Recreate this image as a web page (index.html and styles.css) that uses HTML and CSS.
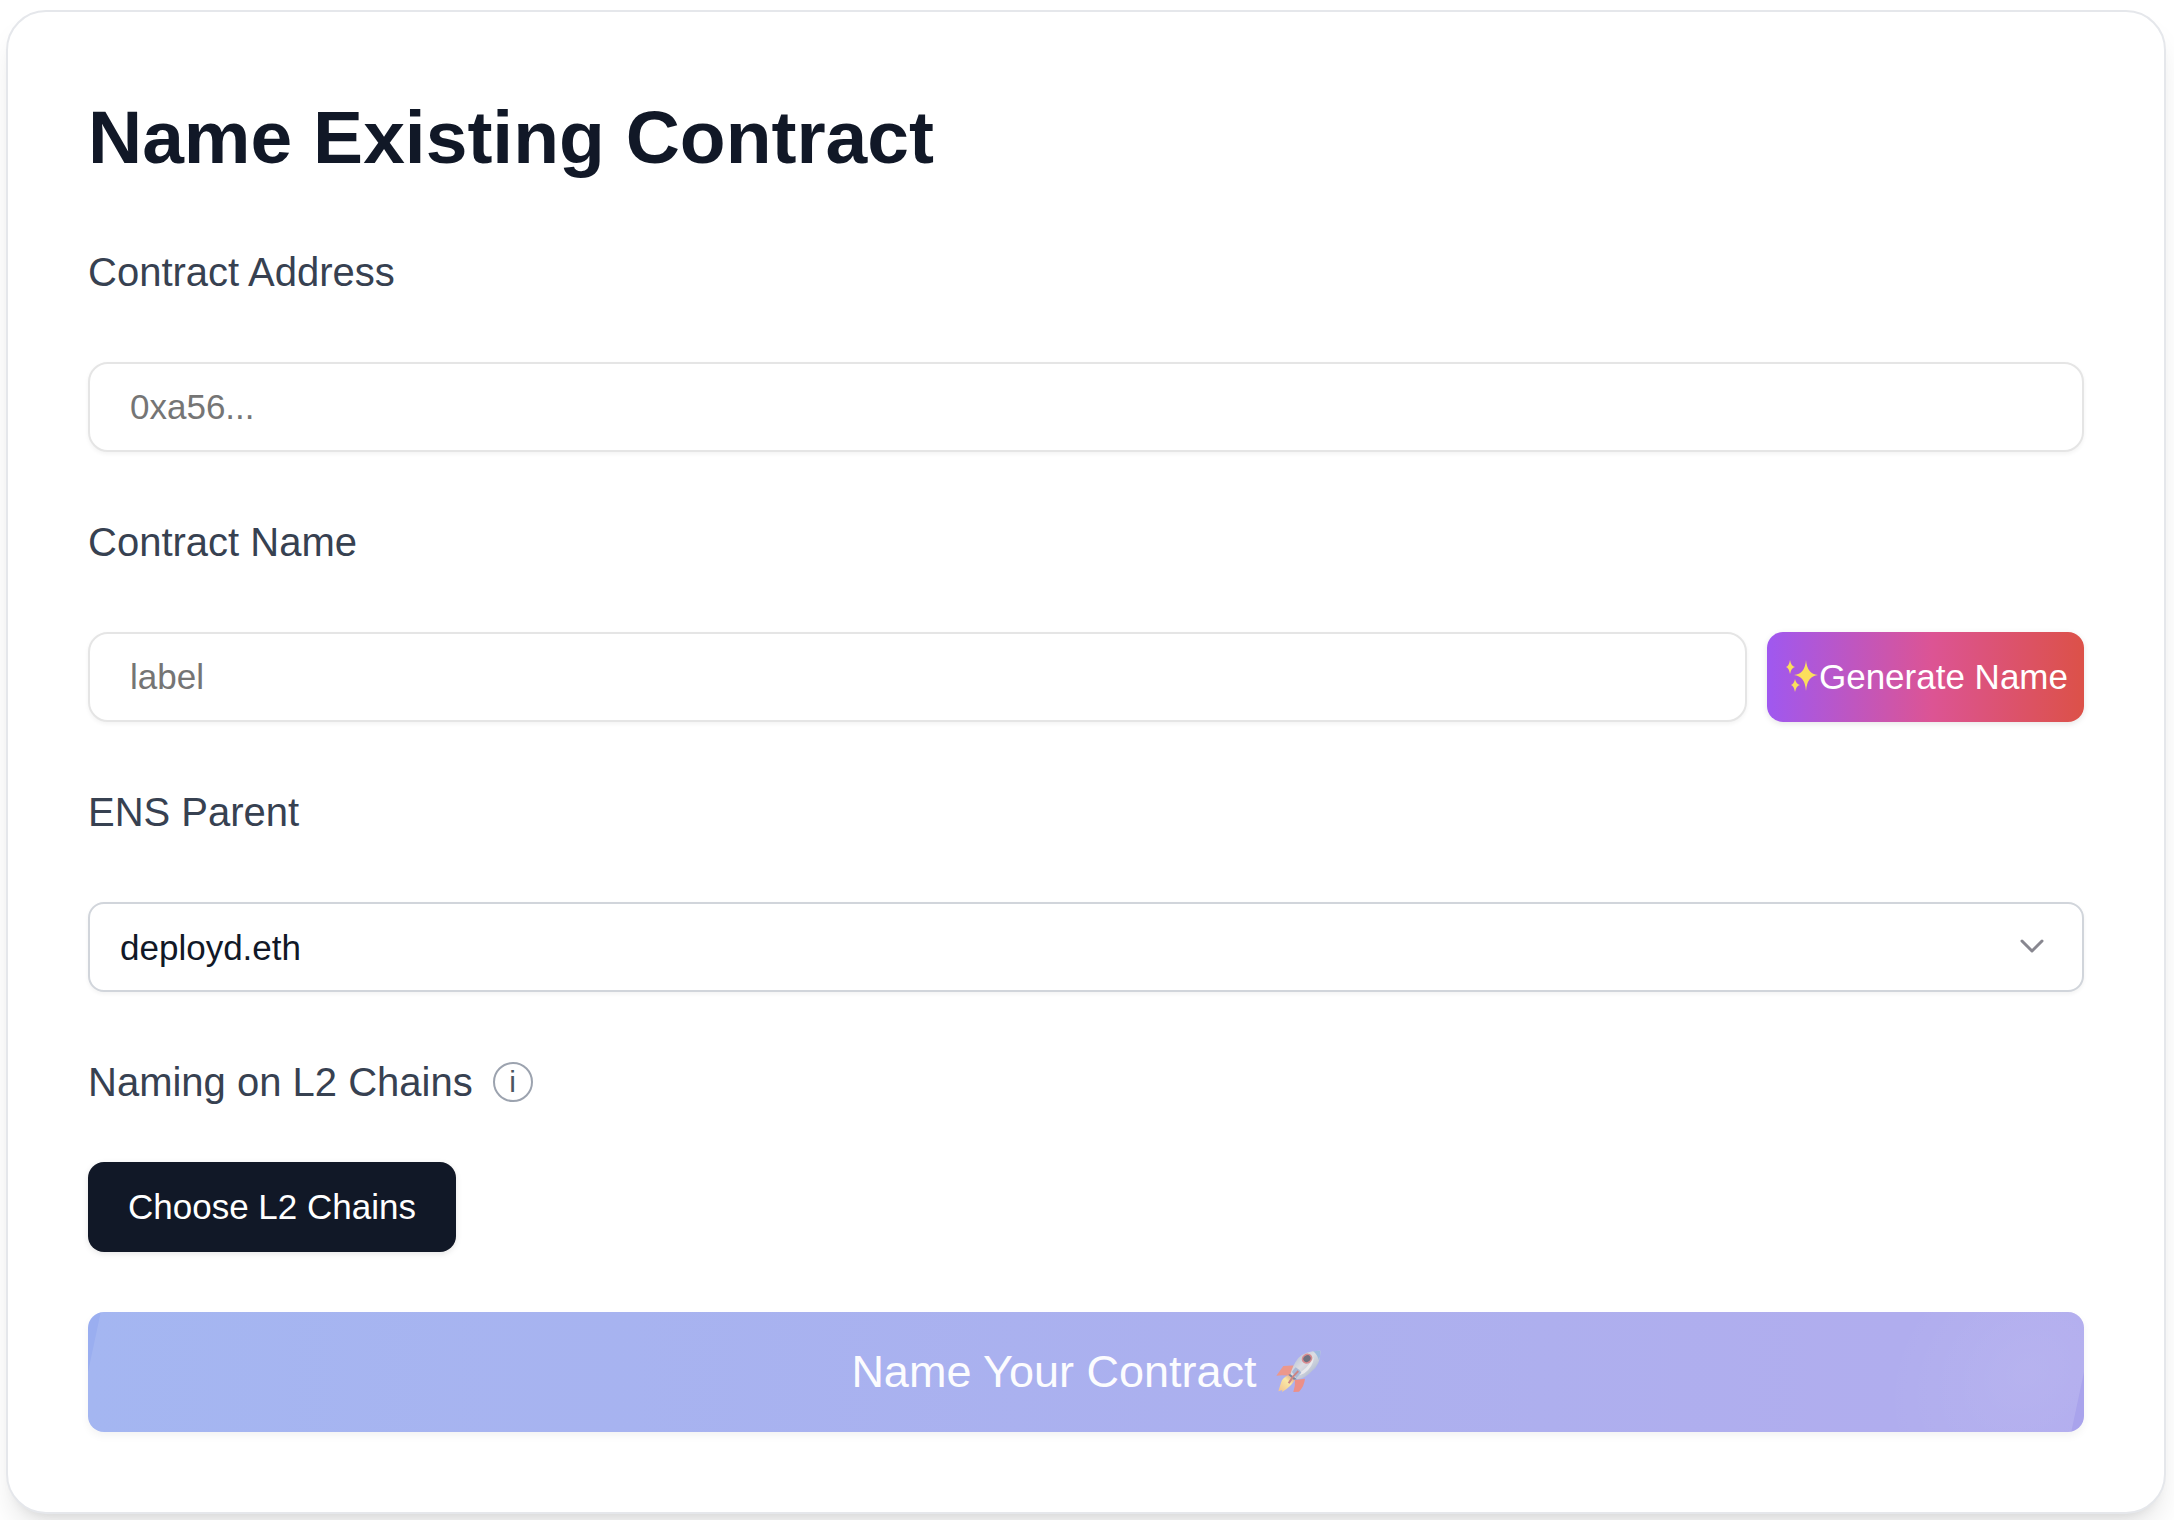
FILE: index.html
```html
<!DOCTYPE html>
<html lang="en">
<head>
    <meta charset="UTF-8">
    <meta name="viewport" content="width=device-width, initial-scale=1.0">
    <title>Name Existing Contract</title>
    <link rel="stylesheet" href="styles.css">
</head>
<body>

    <main class="card">
        <h1>Name Existing Contract</h1>

        <form class="name-form">
            <div class="field">
                <label for="address">Contract Address</label>
                <input type="text" id="address" class="text-input" placeholder="0xa56...">
            </div>

            <div class="field">
                <label for="name">Contract Name</label>
                <div class="input-row">
                    <input type="text" id="name" class="text-input" placeholder="label">
                    <button type="button" class="btn generate-btn">
                        <svg class="sparkles" viewBox="0 0 36 36" aria-hidden="true">
                            <path d="M23 1Q24 15 35 16Q24 17 23 32Q22 17 11 16Q22 15 23 1Z"/>
                            <path d="M7 1Q8 7 12 8Q8 9 7 15Q6 9 3 8Q6 7 7 1Z"/>
                            <path d="M12 20Q13 25 17 26Q13 27 12 33Q11 27 8 26Q11 25 12 20Z"/>
                        </svg>
                        Generate Name
                    </button>
                </div>
            </div>

            <div class="field">
                <label for="parent">ENS Parent</label>
                <div class="select-wrap">
                    <select id="parent" class="select">
                        <option>deployd.eth</option>
                    </select>
                    <svg class="chevron" viewBox="0 0 28 28" aria-hidden="true">
                        <path d="M4 8L14 18L24 8"/>
                    </svg>
                </div>
            </div>

            <div class="field chains">
                <div class="label-row">
                    <label for="chains">Naming on L2 Chains</label>
                    <span class="info">i</span>
                </div>
                <button type="button" id="chains" class="btn chains-btn">Choose L2 Chains</button>
            </div>

            <button type="submit" class="btn submit-btn">
                <span>Name Your Contract</span>
                <svg class="rocket" viewBox="4 0 156 168" aria-hidden="true">
                    <defs>
                        <linearGradient id="body" x1="0" y1="0" x2="1" y2="1">
                            <stop offset="0" stop-color="#a3b3cf"/>
                            <stop offset="0.45" stop-color="#dcdde2"/>
                            <stop offset="0.65" stop-color="#c4cbd8"/>
                            <stop offset="1" stop-color="#8fa0c4"/>
                        </linearGradient>
                        <linearGradient id="flame" x1="1" y1="0" x2="0" y2="1">
                            <stop offset="0" stop-color="#d98b83"/>
                            <stop offset="0.4" stop-color="#f9e9a6"/>
                            <stop offset="1" stop-color="#f3c08e"/>
                        </linearGradient>
                    </defs>
                    <path fill="#ec988c" d="M26 95L47 66Q66 64 86 65L68 96Q47 92 26 95Z"/>
                    <path fill="#ec8f88" d="M82 108L112 104Q110 126 94 143L77 144Q83 126 82 108Z"/>
                    <path fill="url(#flame)" d="M61 94Q44 102 40 116L32 142L44 138L43 144Q69 130 83 106Z"/>
                    <path fill="#77869f" d="M62 92L71 89L90 105L78 107Z"/>
                    <path fill="url(#body)" d="M158 20Q160 60 132 82Q115 103 88 106L68 91Q75 64 92 42Q112 20 158 20Z"/>
                    <path fill="#9dbbe0" d="M136 22L158 20Q159 34 154 49Q148 30 136 22Z"/>
                    <path fill="#e9e9ec" d="M82 94Q116 80 139 39Q136 69 110 88Q97 96 82 94Z"/>
                    <path fill="#a9b8d6" d="M73 84Q79 73 84 70Q96 77 101 86L86 102Z"/>
                    <path fill="none" stroke="#cc8585" stroke-width="6" d="M92 81Q76 95 63 118"/>
                    <ellipse cx="118" cy="44" rx="14" ry="12" fill="#70717f" stroke="#d88a8f" stroke-width="5" transform="rotate(-35 118 44)"/>
                </svg>
            </button>
        </form>
    </main>

</body>
</html>
```
FILE: styles.css
```css
* {
    box-sizing: border-box;
}

body {
    margin: 0;
    padding: 10px 8px 6px 6px;
    font-family: Arial, "Liberation Sans", sans-serif;
    background-color: #fff;
}

.card {
    padding: 80px;
    border: 2px solid #e5e7eb;
    border-radius: 40px;
    background-color: #fff;
    box-shadow: 0 20px 30px -6px rgba(0, 0, 0, 0.1), 0 8px 12px -8px rgba(0, 0, 0, 0.1);
}

h1 {
    margin: 0 0 60px;
    font-size: 75px;
    line-height: 90px;
    color: #111827;
}

.name-form,
.field {
    display: flex;
    flex-direction: column;
    gap: 60px;
}

.chains {
    gap: 50px;
    align-items: flex-start;
}

label {
    font-size: 40px;
    line-height: 60px;
    color: #374151;
}

.input-row,
.label-row {
    display: flex;
    align-items: center;
    gap: 20px;
}

.text-input,
.select {
    width: 100%;
    height: 90px;
    font-family: inherit;
    font-size: 35px;
    color: #111827;
    background-color: #fff;
    box-shadow: 0 2px 4px rgba(0, 0, 0, 0.05);
}

.text-input {
    flex: 1;
    min-width: 0;
    padding: 0 40px;
    border: 2px solid #e5e5e5;
    border-radius: 20px;
}

.field > .text-input {
    flex: none;
}

.text-input::placeholder {
    color: #757575;
}

.select-wrap {
    position: relative;
}

.select {
    display: block;
    appearance: none;
    padding: 0 30px;
    border: 2px solid #d1d5db;
    border-radius: 16px;
}

/* sits over the right end of the select */
.chevron {
    position: absolute;
    top: 50%;
    right: 38px;
    width: 28px;
    height: 28px;
    margin-top: -14px;
    fill: none;
    stroke: #888790;
    stroke-width: 3;
    stroke-linecap: round;
    stroke-linejoin: round;
    pointer-events: none;
}

.info {
    width: 40px;
    height: 40px;
    border: 2px solid #9ca3af;
    border-radius: 50%;
    font-size: 30px;
    line-height: 36px;
    text-align: center;
    color: #4b5563;
}

.btn {
    display: flex;
    align-items: center;
    justify-content: center;
    height: 90px;
    border: none;
    border-radius: 16px;
    font-family: inherit;
    font-size: 35px;
    color: #fff;
    white-space: nowrap;
    cursor: pointer;
    box-shadow: 0 2px 6px rgba(0, 0, 0, 0.1);
}

.generate-btn {
    padding: 0 16px;
    background: linear-gradient(to right, #9f58f0, #dc5494 52%, #dc5148);
}

.sparkles {
    width: 36px;
    height: 36px;
    fill: #fbdf5c;
}

.chains-btn {
    padding: 0 40px;
    background-color: #111827;
}

.submit-btn {
    position: relative;
    overflow: hidden;
    gap: 12px;
    width: 100%;
    height: 120px;
    font-size: 45px;
    color: #fcfcfe;
    background: linear-gradient(to right, #9aaef0, #a9a3ec);
    box-shadow: 0 4px 8px rgba(0, 0, 0, 0.05);
}

/* slanted shine with a soft glow at the right end */
.submit-btn::before {
    content: "";
    position: absolute;
    inset: 0;
    background: radial-gradient(circle at calc(100% - 57px) 50%, rgba(255, 255, 255, 0.08), transparent 140px), rgba(255, 255, 255, 0.1);
    transform: skewX(-12deg);
}

.submit-btn span,
.rocket {
    position: relative;
}

.rocket {
    width: 52px;
    height: 56px;
}
```
